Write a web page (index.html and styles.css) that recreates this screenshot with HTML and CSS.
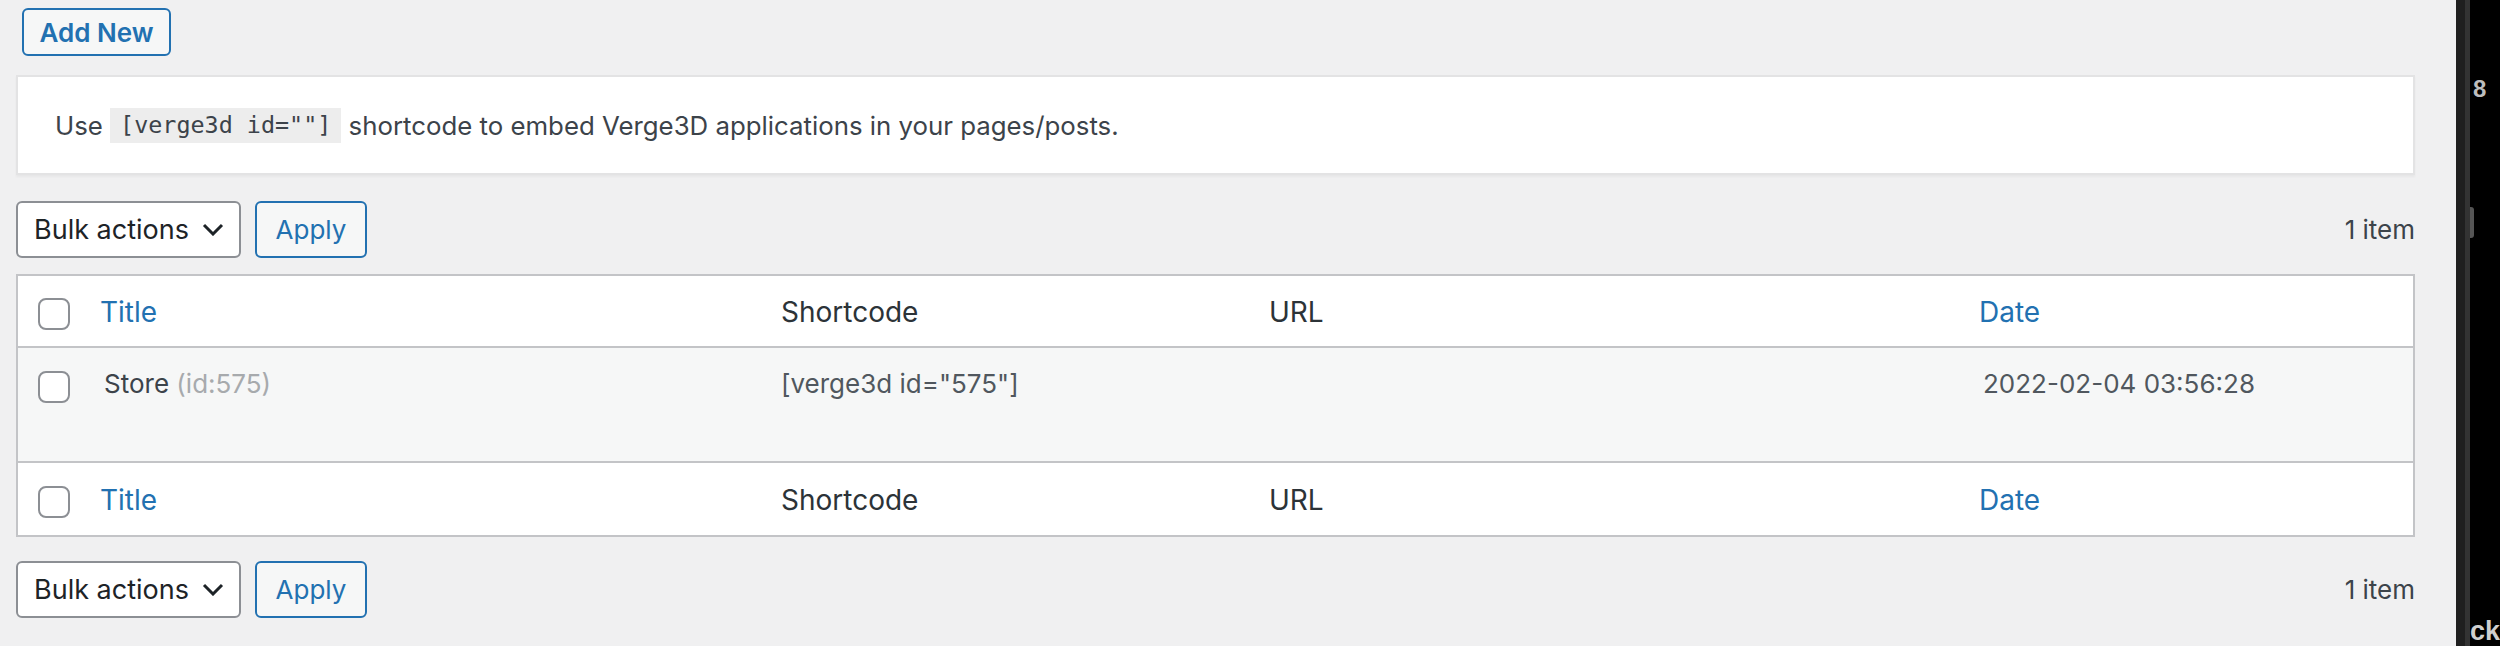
FILE: index.html
```html
<!DOCTYPE html>
<html lang="en">
<head>
<meta charset="utf-8">
<title>Verge3D Applications</title>
<link rel="stylesheet" href="styles.css">
</head>
<body>
<div class="page">
  <main class="wrap">
    <div class="title-row">
      <a class="add-new" href="#">Add New</a>
    </div>

    <div class="notice">
      <p>Use <code>[verge3d id=""]</code> shortcode to embed Verge3D applications in your pages/posts.</p>
    </div>

    <div class="tablenav top">
      <div class="bulk">
        <div class="select">
          <span>Bulk actions</span>
          <svg class="chev" width="22" height="13" viewBox="0 0 22 13"><polyline points="2,2 11,11 20,2" fill="none" stroke="#1d2327" stroke-width="3"/></svg>
        </div>
        <a class="button" href="#">Apply</a>
      </div>
      <div class="count">1 item</div>
    </div>

    <table class="list">
      <colgroup>
        <col class="c-cb"><col class="c-title"><col class="c-short"><col class="c-url"><col class="c-date">
      </colgroup>
      <thead>
        <tr>
          <th class="cb"><span class="box"></span></th>
          <th class="sortable"><a href="#">Title</a></th>
          <th>Shortcode</th>
          <th>URL</th>
          <th class="sortable"><a href="#">Date</a></th>
        </tr>
      </thead>
      <tbody>
        <tr>
          <td class="cb"><span class="box"></span></td>
          <td>Store <span class="id">(id:575)</span></td>
          <td>[verge3d id="575"]</td>
          <td></td>
          <td>2022-02-04 03:56:28</td>
        </tr>
      </tbody>
      <tfoot>
        <tr>
          <th class="cb"><span class="box"></span></th>
          <th class="sortable"><a href="#">Title</a></th>
          <th>Shortcode</th>
          <th>URL</th>
          <th class="sortable"><a href="#">Date</a></th>
        </tr>
      </tfoot>
    </table>

    <div class="tablenav bottom">
      <div class="bulk">
        <div class="select">
          <span>Bulk actions</span>
          <svg class="chev" width="22" height="13" viewBox="0 0 22 13"><polyline points="2,2 11,11 20,2" fill="none" stroke="#1d2327" stroke-width="3"/></svg>
        </div>
        <a class="button" href="#">Apply</a>
      </div>
      <div class="count">1 item</div>
    </div>
  </main>

  <aside class="side">
    <div class="side-edge"></div>
    <div class="side-inner">
      <span class="side-top">8</span>
      <span class="thumb"></span>
      <span class="side-bottom">ck</span>
    </div>
  </aside>
</div>
</body>
</html>
```

FILE: styles.css
```css
* { box-sizing: border-box; }

html, body {
  margin: 0;
  padding: 0;
  background: #f0f0f1;
}

body {
  font-family: Inter, "Noto Sans", "Liberation Sans", sans-serif;
  font-size: 26px;
  color: #3c434a;
}

.page {
  display: flex;
  width: 2500px;
  height: 646px;
  overflow: hidden;
}

.wrap {
  flex: 1;
  padding: 8px 41px 0 16px;
  min-width: 0;
}

/* Add New */
.title-row {
  display: flex;
  padding-left: 6px;
}

.add-new {
  display: inline-flex;
  align-items: center;
  justify-content: center;
  width: 149px;
  height: 48px;
  border: 2px solid #2271b1;
  border-radius: 6px;
  background: #f6f7f7;
  color: #2271b1;
  font-weight: 600;
  font-size: 26px;
  text-decoration: none;
}

/* Notice */
.notice {
  margin-top: 19px;
  height: 100px;
  background: #fff;
  border: 2px solid #e3e3e4;
  box-shadow: 0 2px 2px rgba(0,0,0,.04);
  display: flex;
  align-items: center;
  padding: 0 37px;
}

.notice p {
  margin: 0;
  line-height: 35px;
  font-size: 25.8px;
}

.notice code {
  display: inline-block;
  font-family: "DejaVu Sans Mono", "Liberation Mono", monospace;
  font-size: 23.4px;
  line-height: 35px;
  padding: 0 10px;
  background: #ededed;
  color: #3c434a;
  vertical-align: top;
}

/* Tablenav */
.tablenav {
  display: flex;
  align-items: center;
  justify-content: space-between;
  height: 57px;
}

.tablenav.top { margin-top: 26px; margin-bottom: 16px; }
.tablenav.bottom { margin-top: 24px; }

.bulk {
  display: flex;
  gap: 14px;
  height: 57px;
}

.select {
  display: flex;
  align-items: center;
  justify-content: space-between;
  width: 225px;
  height: 57px;
  padding: 0 15px 0 16px;
  border: 2px solid #8c8f94;
  border-radius: 6px;
  background: #fff;
  color: #1d2327;
  font-size: 27px;
}

.chev { display: block; }

.button {
  display: inline-flex;
  align-items: center;
  justify-content: center;
  width: 112px;
  height: 57px;
  border: 2px solid #2271b1;
  border-radius: 6px;
  background: #f6f7f7;
  color: #2271b1;
  font-size: 26px;
  text-decoration: none;
}

.count {
  color: #3c434a;
  font-size: 26px;
}

/* Table */
.list {
  width: 100%;
  table-layout: fixed;
  border-collapse: separate;
  border-spacing: 0;
  background: #fff;
  border: 2px solid #c3c4c7;
}

.c-cb { width: 66px; }
.c-title { width: 677px; }
.c-short { width: 488px; }
.c-url { width: 714px; }
.c-date { width: 450px; }

.list th, .list td {
  text-align: left;
  vertical-align: top;
  font-weight: 400;
  line-height: 39px;
  padding: 17px 20px 14px;
}

.list th {
  font-size: 28px;
  color: #2c3338;
}

.list th.sortable { padding-left: 16px; }

.list th a {
  color: #2271b1;
  text-decoration: none;
}

.list thead th { border-bottom: 2px solid #c3c4c7; }
.list tfoot th { border-top: 2px solid #c3c4c7; padding-top: 18px; padding-bottom: 15px; }

.list tbody td {
  background: #f6f7f7;
  font-size: 26px;
  color: #50575e;
  padding-top: 16px;
  padding-bottom: 58px;
}

.list tbody td:nth-child(2) { color: #3c434a; }

.list .id { color: #a7aaad; }

.list .cb { padding: 22px 0 0 20px; }
.list tbody .cb { padding-top: 23px; }
.list tfoot .cb { padding-top: 23px; padding-bottom: 0; }

.box {
  display: block;
  width: 32px;
  height: 32px;
  border: 2px solid #8c8f94;
  border-radius: 8px;
  background: #fff;
}

/* Right dark strip */
.side {
  width: 44px;
  display: flex;
  background: #000;
}

.side-edge {
  width: 14px;
  background: linear-gradient(to right, #1f1f1f 0, #1f1f1f 9px, #333 9px, #333 14px);
}

.side-inner {
  flex: 1;
  display: flex;
  flex-direction: column;
  align-items: flex-start;
  overflow: hidden;
  font-family: "Liberation Sans", Arial, sans-serif;
  font-weight: 700;
  color: #bdbdbd;
}

.side-top {
  margin: 76px 0 0 3px;
  font-size: 24px;
  line-height: 26px;
}

.thumb {
  margin-top: 105px;
  width: 4px;
  height: 31px;
  border-radius: 0 3px 3px 0;
  background: #555;
}

.side-bottom {
  margin-top: auto;
  margin-bottom: 2px;
  font-size: 27px;
  line-height: 26px;
  color: #cfcfcf;
}
```
